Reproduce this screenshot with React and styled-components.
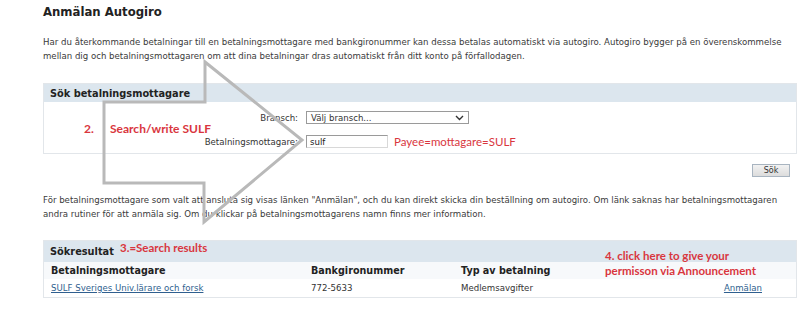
import React from "react"
import styled, { createGlobalStyle } from "styled-components"

const GlobalStyle = createGlobalStyle`
  body {
    margin: 0;
    background: #ffffff;
    font-family: "DejaVu Sans", Verdana, sans-serif;
    color: #333333;
  }
`

const Page = styled.div`
  position: relative;
  width: 800px;
  height: 331px;
  box-sizing: border-box;
  padding: 5px 3px 0 43px;
  overflow: hidden;
`
const Title = styled.h1`
  margin: 0;
  font-size: 11.7px;
  font-weight: bold;
  color: #222222;
  line-height: 14px;
`
const Text = styled.p`
  margin: ${props => props.$top || 0}px 0 0;
  font-size: 8.6px;
  line-height: 14px;
  color: #3a3a3a;
  white-space: nowrap;
`
const Panel = styled.div`
  margin-top: ${props => props.$top}px;
  border: 1px solid #e2e6ea;
  background: #ffffff;
`
const PanelHeader = styled.div`
  height: ${props => props.$h}px;
  display: flex;
  align-items: center;
  padding-left: 6px;
  background: #dce6ee;
  font-size: 9.8px;
  font-weight: bold;
  color: #222222;
`
const FormBody = styled.div`
  display: grid;
  grid-template-columns: 254px 1fr;
  align-items: center;
  row-gap: 11px;
  column-gap: 8px;
  padding: 9px 0 5px;
`
const Label = styled.span`
  justify-self: end;
  font-size: 8.6px;
  color: #333333;
`
const Field = styled.div`
  display: flex;
  align-items: center;
  gap: 6px;
`
const Select = styled.div`
  width: 163px;
  height: 13px;
  box-sizing: border-box;
  border: 1px solid #9a9a9a;
  display: flex;
  align-items: center;
  justify-content: space-between;
  padding: 0 4px;
  font-size: 8.6px;
  color: #333333;
`
const Input = styled.div`
  width: 82px;
  height: 13px;
  box-sizing: border-box;
  border: 1px solid #9a9a9a;
  border-right-color: #d8d8d8;
  border-bottom-color: #d8d8d8;
  display: flex;
  align-items: center;
  padding: 0 3px;
  font-size: 8.6px;
  color: #222222;
`
const Note = styled.span`
  font-family: Lato, "Liberation Sans", sans-serif;
  font-size: 11.5px;
  color: #d9363e;
`
const ButtonRow = styled.div`
  display: flex;
  justify-content: flex-end;
  padding: 10px 7px 0 0;
`
const Button = styled.div`
  width: 38px;
  height: 13px;
  box-sizing: border-box;
  border: 1px solid #a8b4c0;
  background: linear-gradient(#f2f2f2, #dcdcdc);
  display: flex;
  align-items: center;
  justify-content: center;
  font-size: 8px;
  color: #333333;
`
const Table = styled.div`
  display: grid;
  grid-template-columns: 260px 150px 1fr auto;
  padding: 0 34px 0 7px;
  font-size: 8.6px;
`
const HeadCell = styled.div`
  height: 17px;
  display: flex;
  align-items: center;
  font-size: 9.6px;
  font-weight: bold;
  color: #222222;
  background: #f7f9fb;
  margin: 0 ${props => props.$last ? "-34px" : 0} 0 ${props => props.$first ? "-7px" : 0};
  padding-left: ${props => props.$first ? "7px" : 0};
`
const Cell = styled.div`
  height: 18px;
  display: flex;
  align-items: center;
  justify-content: ${props => props.$right ? "flex-end" : "flex-start"};
  color: #333333;
`
const Link = styled.a`
  color: #2f5f8f;
  text-decoration: underline;
`
const Annotation = styled.div`
  position: absolute;
  left: ${props => props.$x}px;
  top: ${props => props.$y}px;
  font-family: Lato, "Liberation Sans", sans-serif;
  font-weight: bold;
  font-size: ${props => props.$size || 12}px;
  line-height: 15px;
  color: #d9363e;
  white-space: nowrap;
`
const Overlay = styled.svg`
  position: absolute;
  left: 0;
  top: 0;
  pointer-events: none;
`

const Chevron = () => (
  <svg width="9" height="6" viewBox="0 0 9 6">
    <path d="M1 1 L4.5 4.5 L8 1" fill="none" stroke="#333" strokeWidth="1.4" />
  </svg>
)

const App = () => (
  <>
    <GlobalStyle />
    <Page>
      <Title>Anmälan Autogiro</Title>
      <Text $top={16}>
        Har du återkommande betalningar till en betalningsmottagare med bankgironummer kan dessa betalas automatiskt via autogiro. Autogiro bygger på en överenskommelse
        <br />
        mellan dig och betalningsmottagaren om att dina betalningar dras automatiskt från ditt konto på förfallodagen.
      </Text>

      <Panel $top={20}>
        <PanelHeader $h={18}>Sök betalningsmottagare</PanelHeader>
        <FormBody>
          <Label>Bransch:</Label>
          <Field>
            <Select>
              <span>Välj bransch...</span>
              <Chevron />
            </Select>
          </Field>
          <Label>Betalningsmottagare:</Label>
          <Field>
            <Input>sulf</Input>
            <Note>Payee=mottagare=SULF</Note>
          </Field>
        </FormBody>
      </Panel>

      <ButtonRow>
        <Button>Sök</Button>
      </ButtonRow>

      <Text $top={16}>
        För betalningsmottagare som valt att ansluta sig visas länken "Anmälan", och du kan direkt skicka din beställning om autogiro. Om länk saknas har betalningsmottagaren
        <br />
        andra rutiner för att anmäla sig. Om du klickar på betalningsmottagarens namn finns mer information.
      </Text>

      <Panel $top={19}>
        <PanelHeader $h={21}>Sökresultat</PanelHeader>
        <Table>
          <HeadCell $first>Betalningsmottagare</HeadCell>
          <HeadCell>Bankgironummer</HeadCell>
          <HeadCell>Typ av betalning</HeadCell>
          <HeadCell $last />
          <Cell><Link href="#">SULF Sveriges Univ.lärare och forsk</Link></Cell>
          <Cell>772-5633</Cell>
          <Cell>Medlemsavgifter</Cell>
          <Cell $right><Link href="#">Anmälan</Link></Cell>
        </Table>
      </Panel>

      <Annotation $x={84} $y={121}>2.</Annotation>
      <Annotation $x={110} $y={121}>Search/write SULF</Annotation>
      <Annotation $x={120} $y={240} $size={11.5}>3.=Search results</Annotation>
      <Annotation $x={605} $y={248} $size={11.5}>
        4. click here to give your
        <br />
        permisson via Announcement
      </Annotation>

      <Overlay width="800" height="331" viewBox="0 0 800 331">
        <polygon
          points="104,102 205,102 205,62 302,140 204,222 204,183 104,183"
          fill="none"
          stroke="#b9b9b9"
          strokeWidth="3"
          strokeLinejoin="miter"
        />
      </Overlay>
    </Page>
  </>
)

export default App
